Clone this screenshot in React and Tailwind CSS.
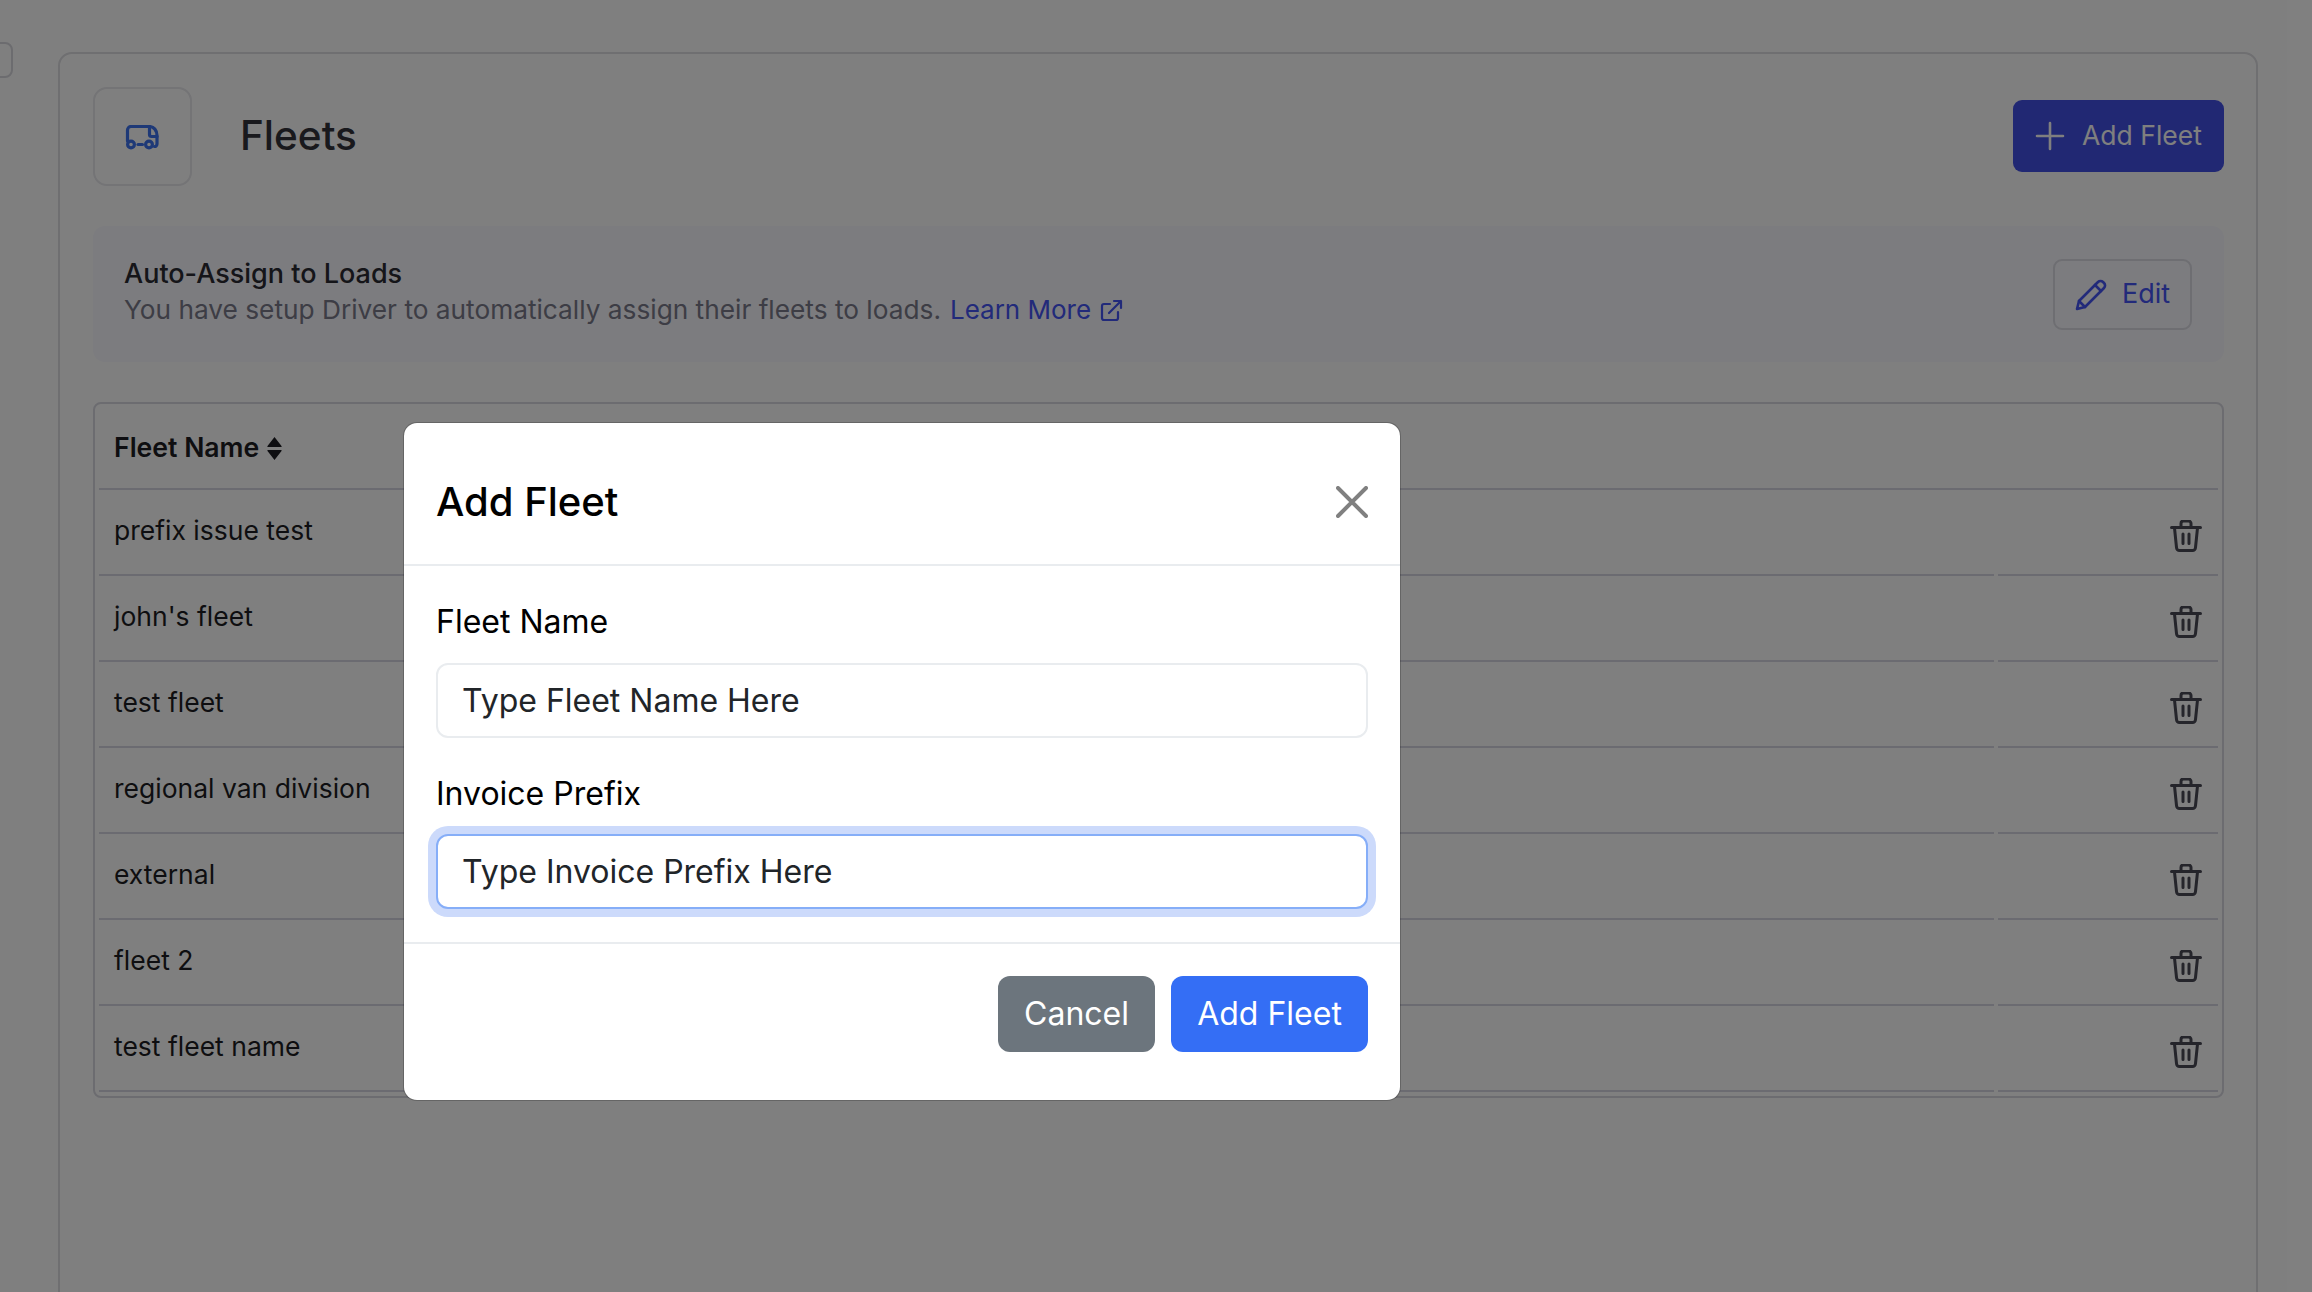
import React from "react";

const rows = ["prefix issue test", "john's fleet", "test fleet", "regional van division", "external", "fleet 2", "test fleet name"];

function Trash() {
  return (
    <svg width="32" height="32" viewBox="0 0 32 32" fill="none" stroke="#4a4a56" strokeWidth="3" strokeLinecap="round" strokeLinejoin="round">
      <path d="M1.5 7.5h29" />
      <path d="M4.5 8l2 19.5a3 3 0 0 0 3 3h13a3 3 0 0 0 3-3l2-19.5" />
      <path d="M11 7V3.5a2.5 2.5 0 0 1 2.5-2.5h5a2.5 2.5 0 0 1 2.5 2.5V7" />
      <path d="M13 14v9.5M19 14v9.5" />
    </svg>
  );
}

function Van() {
  return (
    <svg className="mr-[2px] mt-[1px]" width="34" height="25" viewBox="0 0 34 25" fill="none" stroke="#3d72ee" strokeWidth="3.2" strokeLinecap="round" strokeLinejoin="round">
      <path d="M2.5 16V5a3.5 3.5 0 0 1 3.5-3.5H24c5 0 8 4 8 9V19a2.5 2.5 0 0 1-2.5 2.5" />
      <path d="M24.5 2v7.5a2 2 0 0 0 2 2H32" />
      <circle cx="6" cy="19.5" r="3.4" />
      <circle cx="24" cy="19.5" r="3.4" />
      <path d="M13 19.5h4.5" />
    </svg>
  );
}

export default function App() {
  return (
    <div className="relative h-screen w-full overflow-hidden bg-white pl-[58px] pr-[54px] pt-[52px] font-['Inter',sans-serif] text-[#22222a]">
      <div className="absolute left-[-10px] top-[42px] h-[36px] w-[23px] rounded-lg border-2 border-[#d8d8de]" />

      <div className="h-[1400px] rounded-[14px] border-2 border-[#dedee2] pl-[33px] pr-[32px] pt-[33px]">
        <div className="flex h-[99px] items-center">
          <div className="flex h-[99px] w-[99px] items-center justify-center rounded-[14px] border-2 border-[#e8e8ec]">
            <Van />
          </div>
          <h1 className="ml-[48px] text-[40.5px] leading-none font-medium text-[#33333b]">Fleets</h1>
          <button className="-mt-px ml-auto flex h-[72px] w-[211px] items-center justify-center gap-[17px] rounded-[9px] bg-[#4250e6] text-[26.5px] text-white">
            <svg width="30" height="30" viewBox="0 0 30 30" fill="none" stroke="currentColor" strokeWidth="2.6" strokeLinecap="round">
              <path d="M15 2v26M2 15h26" />
            </svg>
            Add Fleet
          </button>
        </div>

        <div className="mt-[40px] flex h-[136px] items-center justify-between rounded-[12px] bg-[#f8f8fe] pl-[31px] pr-[32px]">
          <div className="pb-[4px] leading-[36px]">
            <div className="text-[27px] font-medium text-[#2a2a32]">Auto-Assign to Loads</div>
            <div className="flex items-center text-[26.25px] text-[#7a7a8a]">
              You have setup Driver to automatically assign their fleets to loads.
              <a className="ml-[9px] flex items-center gap-[9px] text-[26px] text-[#4454f4]">
                Learn More
                <svg width="23" height="23" viewBox="0 0 23 23" fill="none" stroke="currentColor" strokeWidth="2.2" strokeLinecap="round" strokeLinejoin="round">
                  <path d="M10 5H4a2 2 0 0 0-2 2v12a2 2 0 0 0 2 2h12a2 2 0 0 0 2-2v-6" />
                  <path d="M9 14L21 2M14 2h7v7" />
                </svg>
              </a>
            </div>
          </div>
          <button className="flex h-[71px] w-[139px] items-center justify-center gap-[14px] rounded-[9px] border-2 border-[#dcdce4] text-[27px] text-[#4454f4]">
            <svg width="33" height="33" viewBox="0 0 33 33" fill="none" stroke="currentColor" strokeWidth="2.6" strokeLinejoin="round" strokeLinecap="round">
              <path d="M2 31l2-8L23 4a3.5 3.5 0 0 1 5 0l1 1a3.5 3.5 0 0 1 0 5L10 29z" />
              <path d="M4 23l6 6M20 7l6 6" />
            </svg>
            Edit
          </button>
        </div>

        <div className="mt-[40px] rounded-[8px] border-2 border-[#d8d8e0] px-[4px] pb-[4px]">
          <div className="flex h-[86px] items-center border-b-2 border-[#d6d6e2] pl-[15px] pt-[4px] text-[26.6px] font-semibold text-[#1c1c22]">
            Fleet Name
            <svg className="ml-[8px]" width="15" height="23" viewBox="0 0 15 23" fill="#1c1c22">
              <path d="M7.5 0l7 9a.6.6 0 0 1-.5 1H1a.6.6 0 0 1-.5-1zM7.5 23L.5 14a.6.6 0 0 1 .5-1h13a.6.6 0 0 1 .5 1z" />
            </svg>
          </div>
          {rows.map((name) => (
            <div key={name} className="flex h-[86px]">
              <div className="w-[1895px] border-b-2 border-[#d6d6e2] pl-[15px] pt-[24px] text-[26.5px] leading-[32px] text-[#1c1c22]">{name}</div>
              <div className="ml-[4px] flex flex-1 justify-end border-b-2 border-[#d6d6e2] pr-[16px] pt-[30px]">
                <Trash />
              </div>
            </div>
          ))}
        </div>
      </div>

      <div className="absolute inset-0 bg-black/50" />

      <div className="absolute left-[403px] top-[422px] h-[679px] w-[998px] rounded-[14px] border border-black/20 bg-clip-padding bg-white text-[#000]">
        <div className="flex h-[143px] items-center justify-between border-b-2 border-[#e9ecef] px-[32px] pt-[16px]">
          <h2 className="text-[40px] font-medium leading-none">Add Fleet</h2>
          <svg width="32" height="32" viewBox="0 0 32 32" fill="none" stroke="#808080" strokeWidth="4" strokeLinecap="round">
            <path d="M2 2l28 28M30 2L2 30" />
          </svg>
        </div>
        <div className="h-[378px] border-b-2 border-[#e9ecef] px-[32px] pt-[34px]">
          <label className="mb-[19px] block text-[32px] leading-[44px]">Fleet Name</label>
          <div className="flex h-[75px] items-center rounded-[12px] border-2 border-[#e9ecef] bg-white pl-[24px] text-[32px] text-[#212529]">Type Fleet Name Here</div>
          <label className="mb-[18px] mt-[34px] block text-[32px] leading-[44px]">Invoice Prefix</label>
          <div className="flex h-[75px] items-center rounded-[12px] border-2 border-[#86aef8] bg-white pl-[24px] text-[32px] text-[#212529] shadow-[0_0_0_8px_#ccdafb]">Type Invoice Prefix Here</div>
        </div>
        <div className="flex justify-end gap-[16px] px-[32px] pt-[32px]">
          <button className="h-[76px] w-[157px] rounded-[12px] bg-[#6c757d] text-[32px] text-white">Cancel</button>
          <button className="h-[76px] w-[197px] rounded-[12px] bg-[#346ef5] text-[32px] text-white">Add Fleet</button>
        </div>
      </div>
    </div>
  );
}
